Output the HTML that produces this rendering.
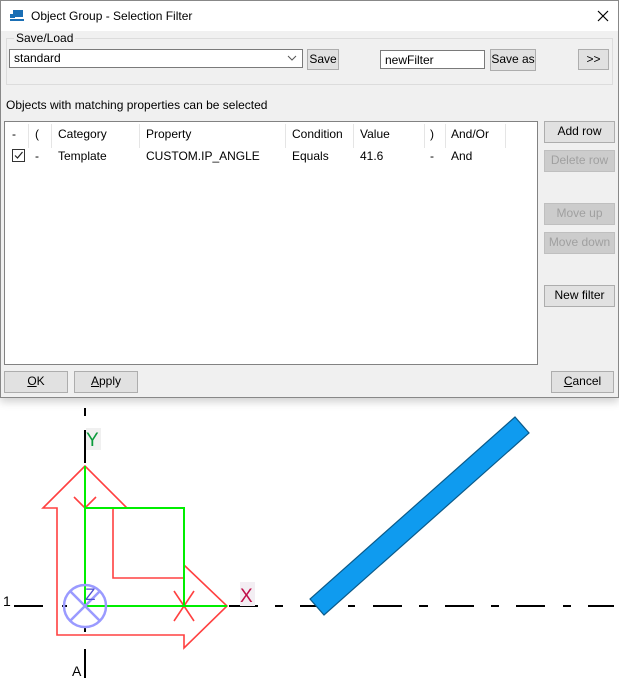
<!DOCTYPE html>
<html><head><style>
*{box-sizing:border-box}
body{margin:0;width:619px;height:685px;background:#fff;font-family:"Liberation Sans",sans-serif;font-size:12px;color:#000;position:relative;overflow:hidden}
.a{position:absolute}
.dlg{left:0;top:0;width:619px;height:398px;background:#f0f0f0;border:1px solid #888;box-shadow:0 4px 8px rgba(0,0,0,.18)}
.btn{position:absolute;background:#e1e1e1;border:1px solid #adadad;text-align:center;line-height:19px;font-size:12px}
.dis{color:#a0a0a0;background:#ccc;border-color:#bfbfbf}
.t{position:absolute;white-space:nowrap}
.sep{position:absolute;top:2px;width:1px;height:24px;background:#e5e5e5}
</style></head><body>
<div class="a dlg">
 <div class="a" style="left:0;top:0;width:617px;height:30px;background:#fff"></div>
 <svg class="a" style="left:8px;top:8px" width="16" height="14"><rect x="4" y="1" width="10" height="7" fill="#1a6fb5"/><rect x="1" y="5" width="5" height="4" fill="#1a6fb5"/><rect x="1" y="10" width="14" height="2" fill="#1a6fb5"/></svg>
 <div class="t" style="left:30px;top:8px;font-size:12px">Object Group - Selection Filter</div>
 <svg class="a" style="left:596px;top:9px" width="12" height="12"><path d="M1 1L11 11M11 1L1 11" stroke="#000" stroke-width="1.2"/></svg>
 <div class="a" style="left:5px;top:37px;width:607px;height:47px;border:1px solid #dcdcdc"></div>
 <div class="t" style="left:13px;top:30px;background:#f0f0f0;padding:0 2px">Save/Load</div>
 <div class="a" style="left:8px;top:48px;width:294px;height:19px;background:#fff;border:1px solid #7a7a7a"></div>
 <div class="t" style="left:13px;top:50px">standard</div>
 <svg class="a" style="left:286px;top:54px" width="10" height="6"><path d="M1 1L5 5L9 1" stroke="#555" fill="none"/></svg>
 <div class="btn" style="left:306px;top:48px;width:32px;height:21px">Save</div>
 <div class="a" style="left:379px;top:49px;width:105px;height:19px;background:#fff;border:1px solid #7a7a7a"></div>
 <div class="t" style="left:384px;top:52px">newFilter</div>
 <div class="btn" style="left:489px;top:48px;width:46px;height:22px">Save as</div>
 <div class="btn" style="left:577px;top:48px;width:31px;height:21px">&gt;&gt;</div>
 <div class="t" style="left:5px;top:97px">Objects with matching properties can be selected</div>
 <div class="a" style="left:3px;top:120px;width:534px;height:244px;background:#fff;border:1px solid #828282">
  <div class="sep" style="left:23px"></div><div class="sep" style="left:46px"></div><div class="sep" style="left:134px"></div><div class="sep" style="left:280px"></div><div class="sep" style="left:348px"></div><div class="sep" style="left:419px"></div><div class="sep" style="left:440px"></div><div class="sep" style="left:500px"></div>
 </div>
 <div class="t" style="left:11px;top:126px">-</div><div class="t" style="left:34px;top:126px">(</div>
 <div class="t" style="left:57px;top:126px">Category</div><div class="t" style="left:145px;top:126px">Property</div>
 <div class="t" style="left:291px;top:126px">Condition</div><div class="t" style="left:359px;top:126px">Value</div>
 <div class="t" style="left:429px;top:126px">)</div><div class="t" style="left:450px;top:126px">And/Or</div>
 <div class="a" style="left:11px;top:148px;width:13px;height:13px;border:1px solid #333;background:#fff"></div>
 <svg class="a" style="left:12px;top:149px" width="11" height="11"><path d="M2 5.5L4.5 8L9.5 2" stroke="#222" stroke-width="1.2" fill="none"/></svg>
 <div class="t" style="left:34px;top:148px">-</div>
 <div class="t" style="left:57px;top:148px">Template</div><div class="t" style="left:145px;top:148px">CUSTOM.IP_ANGLE</div>
 <div class="t" style="left:291px;top:148px">Equals</div><div class="t" style="left:359px;top:148px">41.6</div>
 <div class="t" style="left:429px;top:148px">-</div><div class="t" style="left:450px;top:148px">And</div>
 <div class="btn" style="left:543px;top:120px;width:71px;height:22px">Add row</div>
 <div class="btn dis" style="left:543px;top:149px;width:71px;height:22px">Delete row</div>
 <div class="btn dis" style="left:543px;top:202px;width:71px;height:22px">Move up</div>
 <div class="btn dis" style="left:543px;top:231px;width:71px;height:22px">Move down</div>
 <div class="btn" style="left:543px;top:284px;width:71px;height:22px">New filter</div>
 <div class="btn" style="left:3px;top:370px;width:64px;height:22px"><u>O</u>K</div>
 <div class="btn" style="left:73px;top:370px;width:64px;height:22px"><u>A</u>pply</div>
 <div class="btn" style="left:550px;top:370px;width:63px;height:22px"><u>C</u>ancel</div>
</div>
<svg class="a" style="left:0;top:0" width="619" height="685">
 <g stroke="#000" stroke-width="2">
  <path d="M14 606H43M62 606H67M229 606H258M275 606H283M300 606H331M348 606H355M373 606H402M419 606H428M445 606H474M491 606H499M516 606H545M563 606H571M588 606H614"/>
  <path d="M85 408V416M85 430V463M85 626V632M85 649V678"/>
 </g>
 <rect x="86" y="428" width="15" height="22" fill="#f0f0f0"/>
 <text x="86" y="446" font-family="Liberation Sans" font-size="19" fill="#0a9a3a">Y</text>
 <rect x="240" y="582" width="15" height="24" fill="#f3eef3"/>
 <text x="240" y="602" font-family="Liberation Sans" font-size="19" fill="#c0104a">X</text>
 <g stroke="#ff4040" stroke-width="1.6" fill="none">
  <path d="M85 466L43 508H57V635H184V648L227 606L184 565V578H113V508H127Z"/>
  <path d="M74 497L85 508L96 497M85 508V523"/>
  <path d="M174 591L194 621M194 591L174 621"/>
 </g>
 <g stroke="#00ee00" stroke-width="2" fill="none">
  <path d="M85 466V606H227M85 508H184V606"/>
 </g>
 <g stroke="#9a9aff" stroke-width="2.5" fill="none">
  <circle cx="85" cy="606" r="21"/>
  <path d="M70 591L100 621M100 591L70 621"/>
 </g>
 <text x="85" y="600" font-family="Liberation Sans" font-size="17" fill="#5050d0">Z</text>
 <text x="3" y="606" font-family="Liberation Sans" font-size="14">1</text>
 <text x="72" y="676" font-family="Liberation Sans" font-size="14">A</text>
 <path d="M310 599L324 615L529 433L515 417Z" fill="#0f9bef" stroke="#0a5a8a" stroke-width="1.2"/>
</svg>
</body></html>
